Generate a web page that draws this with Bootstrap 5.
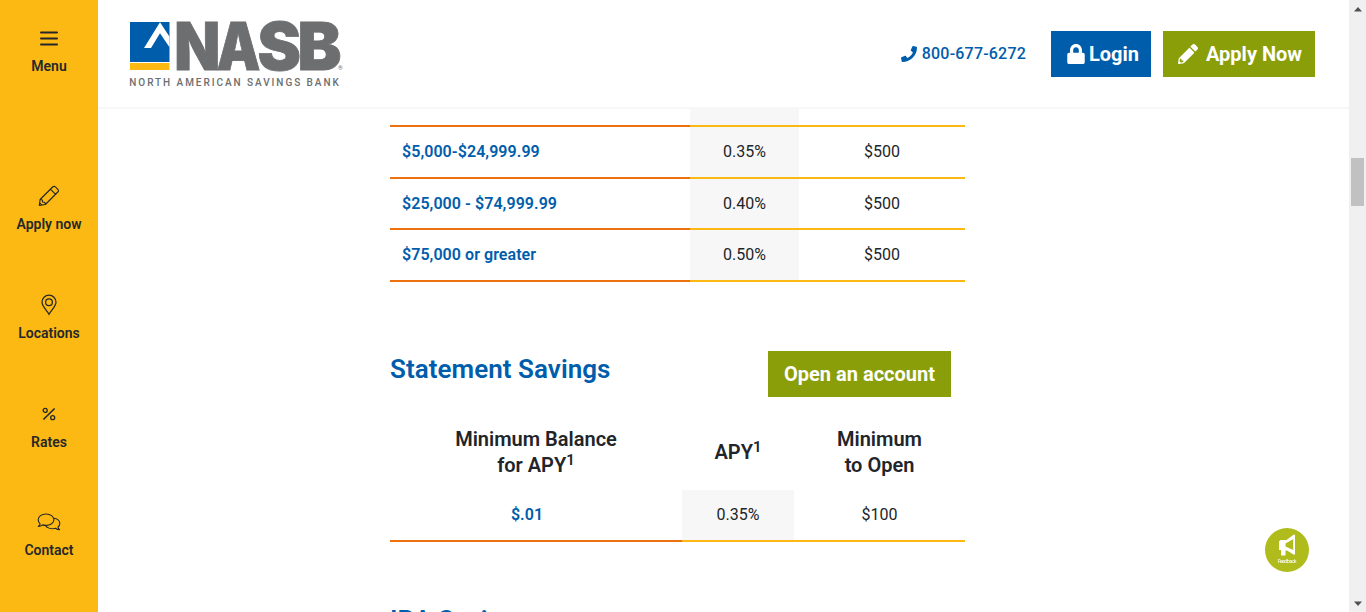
<!DOCTYPE html>
<html lang="en">
<head>
<meta charset="utf-8">
<meta name="viewport" content="width=device-width, initial-scale=1">
<title>NASB - Savings Rates</title>
<link href="https://cdn.jsdelivr.net/npm/bootstrap@5.3.0/dist/css/bootstrap.min.css" rel="stylesheet">
<style>
  body { font-family: Roboto, sans-serif; font-size: 16px; line-height: 25.6px; color: #212529; background: #fff; }
  a { text-decoration: none; }
  .side-rail { width: 98px; background: #fdb913; }
  .side-rail a { color: #25282a; font-size: 14px; font-weight: 600; line-height: 20px; height: 108.8px; flex-shrink: 0; }
  .side-rail a.menu-link { height: 158px; }
  .side-rail .glyph { height: 28px; }
  .side-rail svg { display: block; }
  .site-header { height: 109px; border-bottom: 2px solid #f7f7f7; padding: 20px 34px 0 31px; }
  .site-header svg.logo { overflow: visible; }
  .phone { color: #005dab; font-weight: 500; letter-spacing: .2px; margin: 21px 25px 0 0; }
  .phone svg { margin-right: 4px; }
  .btn-brand { border: 0; border-radius: 0; color: #fff; font-size: 20px; font-weight: 700; height: 46px; line-height: 26px; padding: 10px 0; text-align: center; }
  .btn-blue { background: #005dab; width: 100px; padding-left: 16px; margin: 11px 12px 0 0; }
  .btn-green { background: #8a9e0a; width: 183px; }
  .btn-apply { width: 152px; margin-top: 11px; padding-left: 15px; }
  .content { width: 575px; margin-left: 292px; }
  .rates { width: 575px; table-layout: fixed; border-collapse: separate; border-spacing: 0; }
  .rates td { padding: 12px; border-bottom: 2px solid #fdb913; text-align: center; font-weight: 400; }
  .rates td:first-child { border-bottom-color: #ee7110; color: #005dab; font-weight: 600; letter-spacing: .06px; text-align: left; }
  .rates td:nth-child(2) { background: #f7f7f7; }
  .rates.statement td:first-child { text-align: center; padding-left: 0; padding-right: 18px; }
  .rates th { font-size: 20px; line-height: 26px; font-weight: 600; text-align: center; vertical-align: middle; height: 78px; padding: 3px 0 0; }
  .rates sup { font-size: 15px; line-height: 0; top: -7px; }
  .rates-top { margin-top: -33.6px; }
  .section-title { color: #005dab; font-size: 26px; font-weight: 600; letter-spacing: .05px; line-height: 34px; margin: 0; }
  .statement-head { margin-top: 69px; padding-right: 14px; }
  .statement-head h2 { margin-top: 1px; }
  .statement { margin-top: 15.2px; }
  .ira { margin-top: 61px; }
  .scroll-rail { width: 17px; background: #f0f0f0; }
  .thumb { width: 13px; height: 48px; margin-top: 146px; background: #c1c1c1; }
  .arrow-up { margin-top: 7px; }
  .arrow-down { margin-top: auto; margin-bottom: 6px; }
  .feedback { position: fixed; left: 1265px; top: 528px; }
</style>
</head>
<body>
<div class="d-flex vh-100 overflow-hidden">
  <nav class="side-rail flex-shrink-0 d-flex flex-column text-center pt-4 overflow-hidden">
    <a href="#" class="menu-link d-flex flex-column align-items-center">
      <span class="glyph d-flex align-items-center mb-1"><svg width="18" height="17" viewBox="0 0 18 17" stroke="#25282a" stroke-width="2" stroke-linecap="round"><path d="M1 2.500h16M1 8.500h16M1 14.500h16"/></svg></span>
      Menu
    </a>
    <a href="#" class="d-flex flex-column align-items-center">
      <span class="glyph d-flex align-items-center mb-1"><svg width="22" height="22" viewBox="0 0 22 22" fill="none" stroke="#25282a" stroke-width="1.15" stroke-linejoin="round"><path d="M2.100 14.500 14.600 2c.8-.8 1.900-.9 2.800-.1l2.400 2.400c.9.9.9 1.900 0 2.700L7.400 19.500l-6.100 1zM12.400 4.200l5.200 5.200M2.100 14.500c1.800-.2 2.600.6 2.400 2.500 2-.2 2.900.7 2.900 2.500M1.700 18l2.200 2.100M5.200 16.600"/></svg></span>
      Apply now
    </a>
    <a href="#" class="d-flex flex-column align-items-center">
      <span class="glyph d-flex align-items-center mb-1"><svg width="16" height="22" viewBox="0 0 16 22" fill="none" stroke="#25282a" stroke-width="1.25"><path d="M8 20.300C6 16.500 1 12.200 1 8.200a7 7 0 0 1 14 0c0 4-5 8.300-7 12.100z"/><circle cx="8" cy="8.300" r="3.400"/></svg></span>
      Locations
    </a>
    <a href="#" class="d-flex flex-column align-items-center">
      <span class="glyph d-flex align-items-center mb-1"><svg width="14" height="14" viewBox="0 0 14 14" fill="none" stroke="#25282a" stroke-width="1.300"><circle cx="3.200" cy="3.400" r="2"/><circle cx="10.700" cy="10.700" r="2"/><path d="M1.400 12.500 12.600 1.500" stroke-width="1.600"/></svg></span>
      Rates
    </a>
    <a href="#" class="d-flex flex-column align-items-center">
      <span class="glyph d-flex align-items-center mb-1"><svg width="24" height="18" viewBox="0 0 24 18" fill="none" stroke="#25282a" stroke-width="1.150" stroke-linejoin="round"><path d="M9 1C4.600 1 1.200 3.500 1.200 6.700c0 1.700.8 3 1.900 4.100-.2 1-.9 1.900-1.800 2.600 1.800 0 3.200-.6 4.200-1.500 1.100.4 2.200.5 3.500.5 4.400 0 7.900-2.500 7.900-5.700S13.400 1 9 1z"/><path d="M16.700 5.200c3.500.3 6.100 2.500 6.100 5.200 0 1.500-.8 2.700-1.800 3.600.2 1.100.8 2 1.600 2.700-1.600 0-3-.6-4-1.500-4 1.100-8.400.1-10.300-2.800"/></svg></span>
      Contact
    </a>
  </nav>

  <div class="flex-grow-1 d-flex flex-column overflow-hidden">
    <header class="site-header flex-shrink-0 d-flex align-items-start">
      <a href="#" class="me-auto" aria-label="NASB">
        <svg class="logo d-block" width="216" height="68" viewBox="0 0 216 68">
          <path fill="#005dab" d="M1 2h39.500v40H1z"/>
          <path fill="#fdb913" d="M1 43h39.500v7H1z"/>
          <path fill="#fff" d="M15 28 31 2.300l9.500 14.400v10.500L31 13.300 22 28z"/>
          <g fill="#6d6e70" stroke="#6d6e70" stroke-width=".8" font-family="Inter, sans-serif" font-weight="900" font-size="65.500">
            <text x="45.300" y="49.700" textLength="46" lengthAdjust="spacingAndGlyphs">N</text>
            <text x="87.500" y="49.700" textLength="44" lengthAdjust="spacingAndGlyphs">A</text>
            <text x="128.500" y="49.700" textLength="43.500" lengthAdjust="spacingAndGlyphs">S</text>
            <text x="168.500" y="49.700" textLength="44" lengthAdjust="spacingAndGlyphs">B</text>
          </g>
          <text x="209" y="50" font-family="Roboto, sans-serif" font-size="6" fill="#6d6e70">®</text>
          <text x="0.300" y="66" font-family="Roboto, sans-serif" font-weight="500" font-size="10" textLength="209.500" fill="#6d6e70">NORTH AMERICAN SAVINGS BANK</text>
        </svg>
      </a>
      <a href="#" class="phone d-flex align-items-center">
        <svg width="18" height="16" viewBox="0 0 512 512" fill="#005dab"><path d="M493.400 24.600l-104-24c-11.300-2.600-22.900 3.300-27.500 13.900l-48 112c-4.200 9.800-1.400 21.300 6.900 28l60.600 49.600c-36 76.700-98.900 140.500-177.200 177.200l-49.600-60.600c-6.800-8.300-18.200-11.100-28-6.900l-112 48C3.900 366.500-2 378.100.6 389.400l24 104C27.100 504.200 36.700 512 48 512c256.100 0 464-207.500 464-464 0-11.200-7.700-20.900-18.600-23.400z"/></svg>
        800-677-6272
      </a>
      <a href="#" class="btn btn-brand btn-blue d-flex align-items-center">
        <svg class="flex-shrink-0" width="18" height="20" viewBox="0 0 448 512" fill="#fff"><path d="M400 224h-24v-72C376 68.200 307.800 0 224 0S72 68.200 72 152v72H48c-26.500 0-48 21.500-48 48v192c0 26.500 21.500 48 48 48h352c26.500 0 48-21.500 48-48V272c0-26.500-21.500-48-48-48zm-104 0H152v-72c0-39.700 32.300-72 72-72s72 32.300 72 72v72z"/></svg>
        <span class="ps-1">Login</span>
      </a>
      <a href="#" class="btn btn-brand btn-green btn-apply d-flex align-items-center text-nowrap">
        <svg class="flex-shrink-0" width="20" height="20" viewBox="0 0 512 512" fill="#fff"><path d="M497.900 142.100l-46.100 46.100c-4.700 4.700-12.300 4.700-17 0l-111-111c-4.700-4.700-4.700-12.300 0-17l46.100-46.100c18.700-18.700 49.100-18.700 67.900 0l60.100 60.100c18.800 18.700 18.800 49.100 0 67.900zM284.200 99.800L21.600 362.400.4 483.900c-2.900 16.400 11.400 30.600 27.800 27.800l121.500-21.300 262.600-262.600c4.700-4.700 4.700-12.300 0-17l-111-111c-4.800-4.700-12.400-4.700-17.100 0zM88 424h48v36.300l-64.500 11.300-31.100-31.100L51.700 376H88v48z"/></svg>
        <span class="ps-2">Apply Now</span>
      </a>
    </header>

    <main class="flex-grow-1 overflow-hidden">
      <div class="content d-flex flex-column">
        <table class="rates rates-top">
          <colgroup><col style="width:300px"><col style="width:109px"><col style="width:166px"></colgroup>
          <tbody>
            <tr><td>&nbsp;</td><td></td><td></td></tr>
            <tr><td>$5,000-$24,999.99</td><td>0.35%</td><td>$500</td></tr>
            <tr><td>$25,000 - $74,999.99</td><td>0.40%</td><td>$500</td></tr>
            <tr><td>$75,000 or greater</td><td>0.50%</td><td>$500</td></tr>
          </tbody>
        </table>
        <div class="statement-head d-flex justify-content-between align-items-start">
          <h2 class="section-title">Statement Savings</h2>
          <a href="#" class="btn btn-brand btn-green">Open an account</a>
        </div>
        <table class="rates statement">
          <colgroup><col style="width:292px"><col style="width:112px"><col style="width:171px"></colgroup>
          <thead><tr><th>Minimum Balance<br>for APY<sup>1</sup></th><th>APY<sup>1</sup></th><th>Minimum<br>to Open</th></tr></thead>
          <tbody><tr><td>$.01</td><td>0.35%</td><td>$100</td></tr></tbody>
        </table>
        <h2 class="section-title ira">IRA Savings</h2>
      </div>
    </main>
  </div>

  <div class="scroll-rail flex-shrink-0 d-flex flex-column align-items-center">
    <svg class="arrow-up" width="8" height="5" viewBox="0 0 8 5" fill="#505050"><path d="M0 4.500h8L4 0z"/></svg>
    <div class="thumb"></div>
    <svg class="arrow-down" width="8" height="5" viewBox="0 0 8 5" fill="#505050"><path d="M0 .500h8L4 5z"/></svg>
  </div>
</div>

<a href="#" class="feedback" aria-label="Feedback">
  <svg class="d-block" width="44" height="44" viewBox="0 0 44 44">
    <circle cx="22" cy="22" r="22" fill="#b0bb1c"/>
    <path fill="#fff" d="M15.500 12h6l7-5.300h1.500V26.500h-1.500L22 22.500h-1.500V27.500H16v-5.500h-2v-8.500z"/>
    <path fill="#b0bb1c" d="M20.500 15.500l7.700-4.200v10.700l-7.700-3.500z"/>
    <text x="22" y="35.300" text-anchor="middle" font-family="Roboto, sans-serif" font-size="5.500" fill="#fff" textLength="19">Feedback</text>
  </svg>
</a>
<script src="https://cdn.jsdelivr.net/npm/bootstrap@5.3.0/dist/js/bootstrap.bundle.min.js"></script>
</body>
</html>
